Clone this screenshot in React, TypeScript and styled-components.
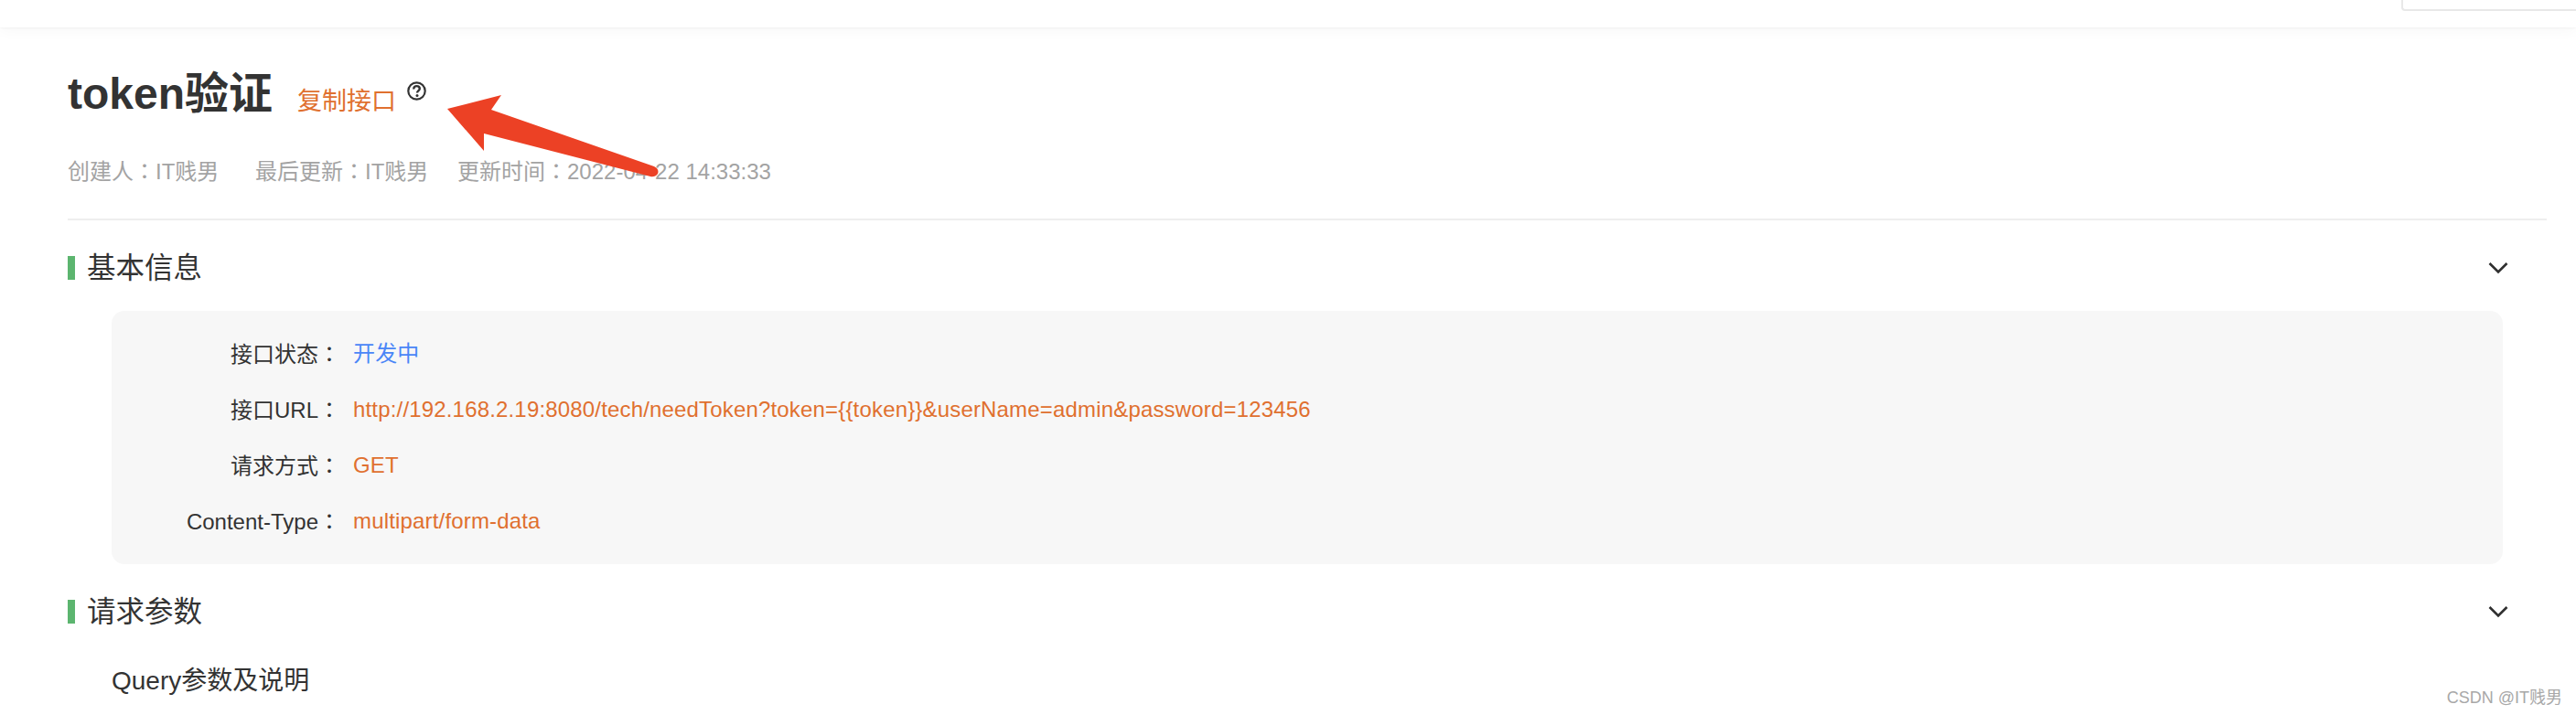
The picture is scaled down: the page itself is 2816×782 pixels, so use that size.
import React from 'react';

import styled, { createGlobalStyle } from 'styled-components';

const rows = [
  { label: '接口状态', value: '开发中', color: '#4a86f7' },
  {
    label: '接口URL',
    value: 'http://192.168.2.19:8080/tech/needToken?token={{token}}&userName=admin&password=123456',
    color: '#e0702f',
  },
  { label: '请求方式', value: 'GET', color: '#e0702f' },
  { label: 'Content-Type', value: 'multipart/form-data', color: '#e0702f' },
];

const Chevron = () => (
  <svg width="22" height="14" viewBox="0 0 22 14" fill="none">
    <path d="M1.5 2 L11 11.5 L20.5 2" stroke="#2f2f2f" strokeWidth="2.6" />
  </svg>
);

const HelpIcon = () => (
  <svg width="21" height="21" viewBox="0 0 21 21" fill="none">
    <circle cx="10.5" cy="10.5" r="9.2" stroke="#333" strokeWidth="2.2" />
    <path
      d="M7.2 8.4 C7.2 6.2 8.7 5.1 10.5 5.1 C12.4 5.1 13.8 6.3 13.8 8 C13.8 10 11 10.2 11 12.6"
      stroke="#333"
      strokeWidth="2.4"
    />
    <circle cx="11" cy="15.5" r="1.5" fill="#333" />
  </svg>
);

const Arrow = () => (
  <ArrowSvg width="240" height="100" viewBox="480 96 240 100">
    <path
      d="M489 119 L548 104 L537 120 L715 182 Q721 185 719 190 Q716 194 711 193 L529 146 L529 165 Z"
      fill="#ec4125"
    />
  </ArrowSvg>
);

export default function App() {
  return (
    <Page>
      <GlobalStyle />
      <TopBar>
        <SearchBox />
      </TopBar>
      <Content>
        <TitleRow>
          <Title>token验证</Title>
          <CopyLink>复制接口</CopyLink>
          <HelpWrap>
            <HelpIcon />
          </HelpWrap>
        </TitleRow>
        <MetaRow>
          <MetaItem $width={205}>创建人<Colon>：</Colon>IT贱男</MetaItem>
          <MetaItem $width={221}>最后更新<Colon>：</Colon>IT贱男</MetaItem>
          <MetaItem>更新时间<Colon>：</Colon>2022-04-22 14:33:33</MetaItem>
        </MetaRow>
        <Divider />
        <SectionHead>
          <SectionTitle>基本信息</SectionTitle>
          <Chevron />
        </SectionHead>
        <Panel>
          {rows.map((row) => (
            <InfoRow key={row.label}>
              <InfoLabel>
                {row.label}
                <Colon>：</Colon>
              </InfoLabel>
              <InfoValue $color={row.color}>{row.value}</InfoValue>
            </InfoRow>
          ))}
        </Panel>
        <SectionHead>
          <SectionTitle>请求参数</SectionTitle>
          <Chevron />
        </SectionHead>
        <SubTitle>Query参数及说明</SubTitle>
      </Content>
      <Arrow />
      <Watermark>CSDN @IT贱男</Watermark>
    </Page>
  );
}

const GlobalStyle = createGlobalStyle`
  html, body {
    margin: 0;
    padding: 0;
    background: #fff;
    overflow: hidden;
  }
  body {
    font-family: "Liberation Sans", "Noto Sans CJK SC", sans-serif;
    color: #333;
  }
`;

const Page = styled.div`
  position: relative;
  width: 2816px;
  height: 782px;
  overflow: hidden;
  background: #fff;
`;

const TopBar = styled.div`
  display: flex;
  justify-content: flex-end;
  align-items: flex-start;
  height: 30px;
  background: #fff;
  box-shadow: 0 0 3px rgba(0, 0, 0, 0.07), 0 4px 16px rgba(0, 0, 0, 0.03);
`;

const SearchBox = styled.div`
  width: 189px;
  height: 10px;
  border: 2px solid #e8e8e8;
  border-top: none;
  border-right: none;
  border-bottom-left-radius: 4px;
`;

const Content = styled.div`
  padding: 43px 32px 0 74px;
`;

const TitleRow = styled.div`
  display: flex;
  align-items: flex-start;
  height: 60px;
`;

const Title = styled.h1`
  margin: 0;
  font-size: 48px;
  line-height: 60px;
  font-weight: 700;
  color: #333;
`;

const CopyLink = styled.span`
  margin: 23px 0 0 27px;
  font-size: 27px;
  line-height: 30px;
  color: #e0702f;
`;

const HelpWrap = styled.span`
  display: flex;
  margin-left: 12px;
  margin-top: 16px;
`;

const MetaRow = styled.div`
  display: flex;
  margin-top: 39px;
  height: 30px;
  align-items: center;
`;

const MetaItem = styled.span<{ $width?: number }>`
  width: ${(props) => (props.$width ? `${props.$width}px` : 'auto')};
  font-size: 24px;
  line-height: 30px;
  color: #a3a3a3;
  white-space: nowrap;
`;

const Colon = styled.span`
  font-family: "Noto Sans CJK TC", sans-serif;
`;

const Divider = styled.div`
  height: 2px;
  margin-top: 37px;
  background: #eee;
`;

const SectionHead = styled.div`
  display: flex;
  align-items: center;
  justify-content: space-between;
  height: 26px;
  margin: 39px 42px 0 0;
  border-left: 8px solid #5cb56f;
  padding-left: 13px;
`;

const SectionTitle = styled.h2`
  margin: 0;
  font-size: 31.5px;
  line-height: 26px;
  font-weight: 400;
  color: #333;
`;

const Panel = styled.div`
  display: flex;
  flex-direction: column;
  margin: 34px 48px 0 48px;
  padding: 16px 0 17px;
  border-radius: 14px;
  background: #f7f7f7;
`;

const InfoRow = styled.div`
  display: flex;
  align-items: center;
  height: 61px;
`;

const InfoLabel = styled.span`
  width: 250px;
  font-size: 24px;
  line-height: 30px;
  text-align: right;
  color: #333;
  white-space: nowrap;
`;

const InfoValue = styled.span<{ $color: string }>`
  margin-left: 14px;
  font-size: 24px;
  line-height: 30px;
  letter-spacing: 0.17px;
  color: ${(props) => props.$color};
  white-space: nowrap;
`;

const SubTitle = styled.div`
  margin: 43px 0 0 48px;
  font-size: 28px;
  line-height: 40px;
  color: #333;
`;

const ArrowSvg = styled.svg`
  position: absolute;
  left: 480px;
  top: 96px;
`;

const Watermark = styled.div`
  position: absolute;
  right: 15px;
  bottom: 7px;
  font-size: 18px;
  line-height: 24px;
  color: #a8a8a8;
`;
